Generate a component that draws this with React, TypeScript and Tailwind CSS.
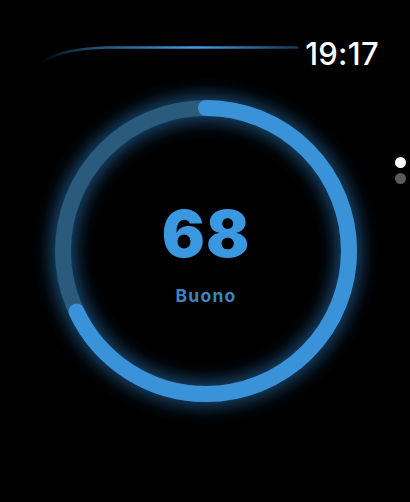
import React from "react";

const R = 143;
const C = 2 * Math.PI * R;
const PCT = 0.68;

export default function App() {
  return (
    <div className="w-[410px] h-[502px] bg-black overflow-hidden relative flex flex-col" style={{ fontFamily: "Inter, 'Liberation Sans', sans-serif" }}>
      {/* header */}
      <div className="h-[81px] flex items-start justify-between">
        <svg width="270" height="30" viewBox="0 0 270 30" className="mt-[40px] ml-[38px]">
          <defs>
            <linearGradient id="lg" x1="0" y1="0" x2="1" y2="0">
              <stop offset="0" stopColor="#3b9be0" stopOpacity="0" />
              <stop offset="0.25" stopColor="#2f6f9e" stopOpacity="0.8" />
              <stop offset="0.6" stopColor="#3fa0e6" />
              <stop offset="1" stopColor="#163a58" />
            </linearGradient>
          </defs>
          <path d="M4 22 C 20 12, 40 8, 70 7.5 L 262 7.5" fill="none" stroke="url(#lg)" strokeWidth="2.5" strokeLinecap="round" />
        </svg>
        <div className="mt-[38px] mr-[31px] text-white text-[31px] leading-[31px] font-medium tracking-[0.3px]">19:17</div>
      </div>

      {/* ring */}
      <div className="grid ml-[36px] w-[340px] h-[340px]">
        <svg width="340" height="340" viewBox="0 0 340 340" className="col-start-1 row-start-1 overflow-visible">
          <defs>
            <filter id="glow" x="-25%" y="-25%" width="150%" height="150%">
              <feGaussianBlur stdDeviation="9" />
            </filter>
          </defs>
          <circle cx="170" cy="170" r={R} fill="none" stroke="#2d8ad8" strokeOpacity="0.55" strokeWidth="24" filter="url(#glow)" />
          <circle cx="170" cy="170" r={R} fill="none" stroke="#2a5a7c" strokeWidth="16" />
          <circle
            cx="170"
            cy="170"
            r={R}
            fill="none"
            stroke="#3a92d8"
            strokeWidth="16"
            strokeLinecap="round"
            strokeDasharray={`${C * PCT} ${C}`}
            transform="rotate(-90 170 170)"
          />
        </svg>
        <div className="col-start-1 row-start-1 flex flex-col items-center pt-[122px]">
          <div className="text-[64px] leading-[62px] font-black text-[#3a98e0] tracking-[1px]">68</div>
          <div className="mt-[22px] text-[17.5px] leading-[18px] font-bold text-[#3a85c4] tracking-[1.2px]">Buono</div>
        </div>
      </div>

      {/* page dots */}
      <div className="absolute left-[395px] top-[157px] flex flex-col gap-[5px]">
        <div className="w-[11px] h-[11px] rounded-full bg-white" />
        <div className="w-[11px] h-[11px] rounded-full bg-[#5a5a5a]" />
      </div>
    </div>
  );
}
